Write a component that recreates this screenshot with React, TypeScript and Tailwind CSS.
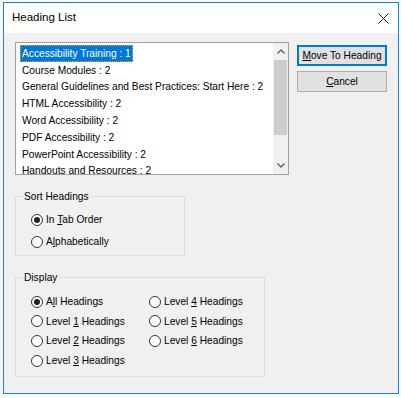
import React from "react";

const font = { fontFamily: '"Liberation Sans", Arial, sans-serif' };

const headings = [
  "Accessibility Training : 1",
  "Course Modules : 2",
  "General Guidelines and Best Practices: Start Here : 2",
  "HTML Accessibility : 2",
  "Word Accessibility : 2",
  "PDF Accessibility : 2",
  "PowerPoint Accessibility : 2",
  "Handouts and Resources : 2",
];

function Radio({ checked, children }: { checked?: boolean; children: React.ReactNode }) {
  return (
    <div className="flex items-center h-[19.6px]">
      <span className="w-[12px] h-[12px] rounded-full border border-[#333] bg-white flex items-center justify-center shrink-0">
        {checked && <span className="w-[6px] h-[6px] rounded-full bg-[#222]" />}
      </span>
      <span className="ml-[3px] text-[10.2px] text-black whitespace-nowrap">{children}</span>
    </div>
  );
}

function U({ children }: { children: React.ReactNode }) {
  return <span className="underline underline-offset-[1px]">{children}</span>;
}

export default function App() {
  return (
    <div className="w-[401px] h-[398px] bg-[#f7f7f7] pt-[2px] pl-[3px] overflow-hidden" style={font}>
      <div className="w-[396px] h-[392px] border border-[#1883d7] bg-[#f0f0f0] flex flex-col">
        {/* title bar */}
        <div className="h-[30px] bg-white flex items-center justify-between pl-[8px] pr-[9px] shrink-0">
          <span className="text-[11.5px] text-black">Heading List</span>
          <svg width="11" height="11" viewBox="0 0 11 11">
            <path d="M0.5 0.5 L10.5 10.5 M10.5 0.5 L0.5 10.5" stroke="#222" strokeWidth="1" />
          </svg>
        </div>

        <div className="pl-[11px] pt-[9px] flex flex-col">
          <div className="flex items-start">
            {/* list box */}
            <div className="w-[274px] h-[133px] border border-[#a0a0a0] bg-white flex overflow-hidden">
              <div className="flex-1 pt-[2px] pl-[4px] overflow-hidden">
                {headings.map((h, i) => (
                  <div key={h} className="h-[16.8px] flex items-center">
                    <span
                      className={
                        i === 0
                          ? "h-[17px] flex items-center px-[1px] bg-[#0078d7] text-white border border-dotted border-[#f2a040] text-[10.2px] whitespace-nowrap"
                          : "px-[2px] text-[10.2px] text-black whitespace-nowrap"
                      }
                    >
                      {h}
                    </span>
                  </div>
                ))}
              </div>
              {/* scrollbar */}
              <div className="w-[15px] bg-[#f0f0f0] flex flex-col shrink-0">
                <div className="h-[17px] flex items-center justify-center">
                  <svg width="8" height="5" viewBox="0 0 8 5">
                    <path d="M0.5 4.5 L4 1 L7.5 4.5" fill="none" stroke="#606060" strokeWidth="1.4" />
                  </svg>
                </div>
                <div className="h-[75px] bg-[#cdcdcd] mx-[1px]" />
                <div className="flex-1" />
                <div className="h-[17px] flex items-center justify-center">
                  <svg width="8" height="5" viewBox="0 0 8 5">
                    <path d="M0.5 0.5 L4 4 L7.5 0.5" fill="none" stroke="#606060" strokeWidth="1.4" />
                  </svg>
                </div>
              </div>
            </div>

            {/* buttons */}
            <div className="ml-[8px] mt-[3px] flex flex-col gap-[5px]">
              <button className="w-[90px] h-[21px] bg-[#e1e1e1] border-2 border-[#0078d7] text-[10.2px] text-black flex items-center justify-center">
                <span><U>M</U>ove To Heading</span>
              </button>
              <button className="w-[90px] h-[21px] bg-[#e1e1e1] border border-[#adadad] text-[10.2px] text-black flex items-center justify-center">
                <span><U>C</U>ancel</span>
              </button>
            </div>
          </div>

          {/* sort headings */}
          <fieldset className="mt-[15px] w-[170px] h-[66px] border border-[#dcdcdc] pl-[15px] pt-[7px]">
            <legend className="ml-[-8px] px-[1px] text-[10.2px] text-black leading-[13px]">Sort Headings</legend>
            <div className="flex flex-col gap-[2.4px]">
              <Radio checked>
                In <U>T</U>ab Order
              </Radio>
              <Radio>
                A<U>l</U>phabetically
              </Radio>
            </div>
          </fieldset>

          {/* display */}
          <fieldset className="mt-[15px] w-[250px] h-[106px] border border-[#dcdcdc] pl-[15px] pt-[8px]">
            <legend className="ml-[-8px] px-[1px] text-[10.2px] text-black leading-[13px]">Display</legend>
            <div className="flex">
              <div className="w-[118px] flex flex-col">
                <Radio checked>
                  A<U>l</U>l Headings
                </Radio>
                <Radio>
                  Level <U>1</U> Headings
                </Radio>
                <Radio>
                  Level <U>2</U> Headings
                </Radio>
                <Radio>
                  Level <U>3</U> Headings
                </Radio>
              </div>
              <div className="flex flex-col">
                <Radio>
                  Level <U>4</U> Headings
                </Radio>
                <Radio>
                  Level <U>5</U> Headings
                </Radio>
                <Radio>
                  Level <U>6</U> Headings
                </Radio>
              </div>
            </div>
          </fieldset>
        </div>
      </div>
    </div>
  );
}
